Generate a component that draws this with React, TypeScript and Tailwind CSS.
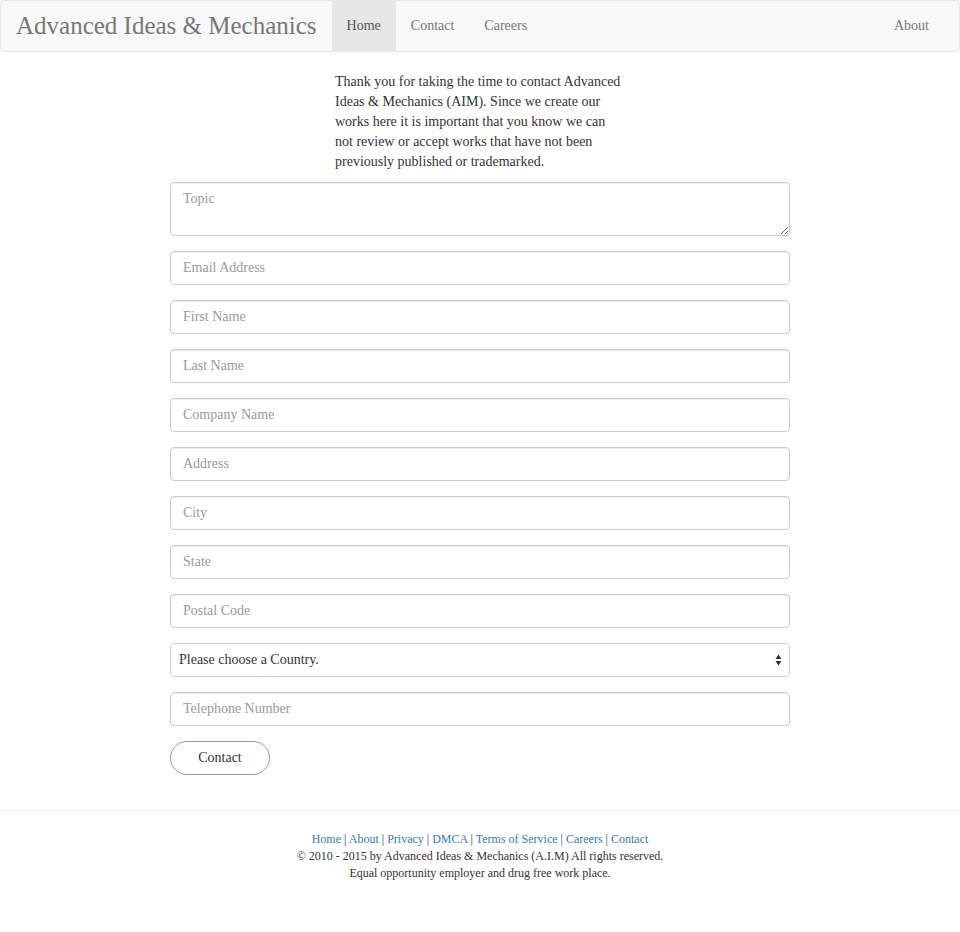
import React from "react";

const inputCls =
  "block w-full h-[34px] px-3 py-[6px] text-[14px] leading-5 text-[#555] bg-white border border-[#ccc] rounded-[4px] shadow-[inset_0_1px_1px_rgba(0,0,0,0.075)] placeholder:text-[#999] outline-none";

export default function App() {
  const fields = [
    "Email Address",
    "First Name",
    "Last Name",
    "Company Name",
    "Address",
    "City",
    "State",
    "Postal Code",
  ];
  const links = ["Home", "About", "Privacy", "DMCA", "Terms of Service", "Careers", "Contact"];
  return (
    <div
      className="min-h-[932px] bg-white text-[#333] text-[14px] leading-5"
      style={{ fontFamily: '"Liberation Serif", "Times New Roman", serif' }}
    >
      {/* Navbar */}
      <nav className="h-[52px] bg-[#f8f8f8] border border-[#e7e7e7] rounded-[4px] flex items-stretch mb-5">
        <div className="px-[15px] flex items-center text-[25px] text-[#777] leading-[50px] h-[50px]">
          Advanced Ideas &amp; Mechanics
        </div>
        <ul className="flex h-[50px]">
          <li className="px-[15px] leading-[50px] bg-[#e7e7e7] text-[#555]">Home</li>
          <li className="px-[15px] leading-[50px] text-[#777]">Contact</li>
          <li className="px-[15px] leading-[50px] text-[#777]">Careers</li>
        </ul>
        <div className="flex-1" />
        <ul className="flex h-[50px] mr-[15px]">
          <li className="px-[15px] leading-[50px] text-[#777]">About</li>
        </ul>
      </nav>

      {/* Intro */}
      <div className="w-[620px] mx-auto">
        <p className="w-[290px] ml-[165px] mb-[10px]">
          Thank you for taking the time to contact Advanced Ideas &amp; Mechanics (AIM). Since we
          create our works here it is important that you know we can not review or accept works
          that have not been previously published or trademarked.
        </p>
      </div>

      {/* Form */}
      <form className="w-[620px] mx-auto flex flex-col gap-[15px]" onSubmit={(e) => e.preventDefault()}>
        <textarea
          rows={2}
          placeholder="Topic"
          className="block w-full h-[54px] px-3 py-[6px] text-[14px] leading-5 text-[#555] bg-white border border-[#ccc] rounded-[4px] shadow-[inset_0_1px_1px_rgba(0,0,0,0.075)] placeholder:text-[#999] outline-none"
        />
        {fields.map((f) => (
          <input key={f} type="text" placeholder={f} className={inputCls} />
        ))}
        <div className="relative">
          <select className="block w-full h-[34px] pl-2 pr-6 text-[14px] text-[#333] bg-white border border-[#ccc] rounded-[4px] appearance-none outline-none">
            <option>Please choose a Country.</option>
          </select>
          <svg
            className="absolute right-[8px] top-[11px] pointer-events-none"
            width="7"
            height="12"
            viewBox="0 0 7 12"
          >
            <path d="M3.5 0.5 L6.5 5 L0.5 5 Z" fill="#333" />
            <path d="M3.5 11.5 L6.5 7 L0.5 7 Z" fill="#333" />
          </svg>
        </div>
        <input type="text" placeholder="Telephone Number" className={inputCls} />
        <div>
          <button
            type="submit"
            className="w-[100px] h-[34px] border border-[#999] rounded-[17px] bg-white text-[#333] text-[14px]"
          >
            Contact
          </button>
        </div>
      </form>

      <hr className="mt-[35px] mb-5 border-0 border-t border-[#eee]" />

      {/* Footer */}
      <footer className="text-center text-[12px] leading-[17px] text-[#333]">
        <div>
          {links.map((l, i) => (
            <React.Fragment key={l}>
              {i > 0 && <span className="text-[#333]"> | </span>}
              <a className="text-[#337ab7]" href="#">
                {l}
              </a>
            </React.Fragment>
          ))}
        </div>
        <div>© 2010 - 2015 by Advanced Ideas &amp; Mechanics (A.I.M) All rights reserved.</div>
        <div>Equal opportunity employer and drug free work place.</div>
      </footer>
    </div>
  );
}
